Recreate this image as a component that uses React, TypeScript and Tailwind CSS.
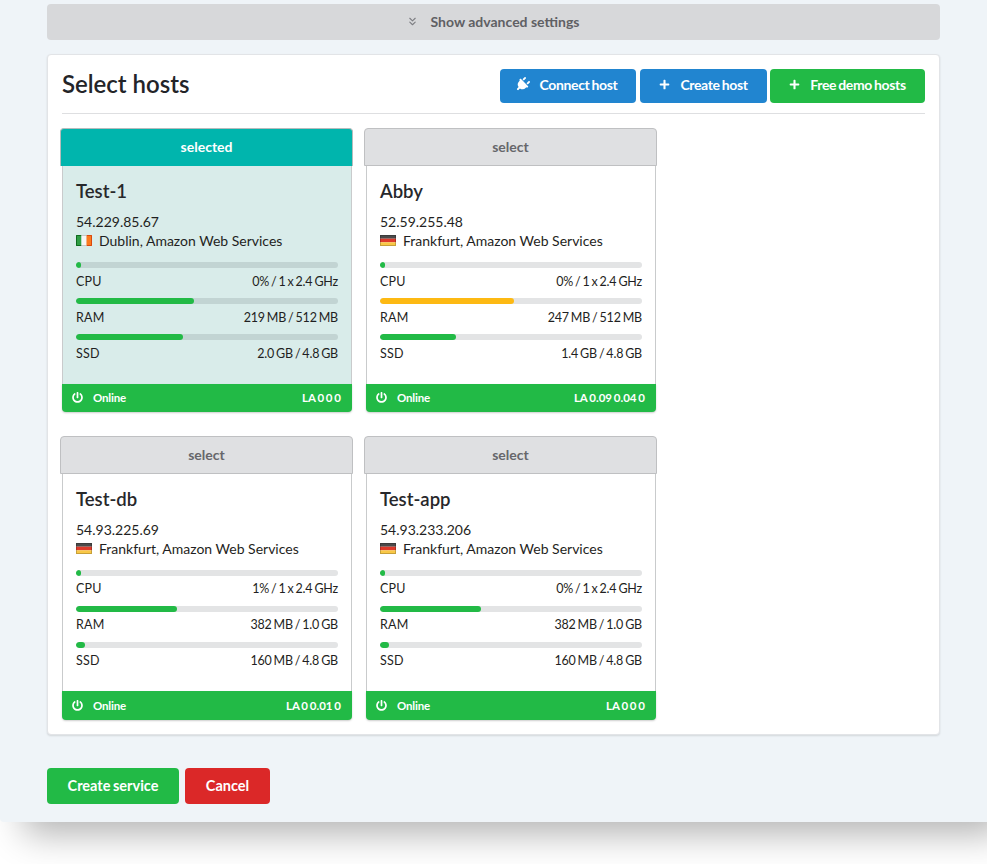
import { ChevronsDown } from 'lucide-react'
import { FaPlug, FaPlus, FaPowerOff } from 'react-icons/fa'

type Host = {
  name: string
  ip: string
  city: string
  flag: 'ie' | 'de'
  selected?: boolean
  cpu: string
  cpuPct: number
  ram: string
  ramPct: number
  ramColor?: string
  ssd: string
  ssdPct: number
  la: string
}

const hosts: Host[] = [
  { name: 'Test-1', ip: '54.229.85.67', city: 'Dublin, Amazon Web Services', flag: 'ie', selected: true, cpu: '0% / 1 x 2.4 GHz', cpuPct: 2, ram: '219 MB / 512 MB', ramPct: 45, ssd: '2.0 GB / 4.8 GB', ssdPct: 41, la: 'LA 0 0 0' },
  { name: 'Abby', ip: '52.59.255.48', city: 'Frankfurt, Amazon Web Services', flag: 'de', cpu: '0% / 1 x 2.4 GHz', cpuPct: 2, ram: '247 MB / 512 MB', ramPct: 51, ramColor: '#fdb913', ssd: '1.4 GB / 4.8 GB', ssdPct: 29, la: 'LA 0.09 0.04 0' },
  { name: 'Test-db', ip: '54.93.225.69', city: 'Frankfurt, Amazon Web Services', flag: 'de', cpu: '1% / 1 x 2.4 GHz', cpuPct: 2, ram: '382 MB / 1.0 GB', ramPct: 38.5, ssd: '160 MB / 4.8 GB', ssdPct: 3.3, la: 'LA 0 0.01 0' },
  { name: 'Test-app', ip: '54.93.233.206', city: 'Frankfurt, Amazon Web Services', flag: 'de', cpu: '0% / 1 x 2.4 GHz', cpuPct: 2, ram: '382 MB / 1.0 GB', ramPct: 38.5, ssd: '160 MB / 4.8 GB', ssdPct: 3.3, la: 'LA 0 0 0' },
]

function Flag({ code }: { code: 'ie' | 'de' }) {
  if (code === 'ie') {
    return (
      <svg width="16" height="11" viewBox="0 0 16 11" className="shrink-0">
        <rect width="5.5" height="11" fill="#2f9e44" />
        <rect x="5.5" width="5" height="11" fill="#f6f6f6" />
        <rect x="10.5" width="5.5" height="11" fill="#fb7a1e" />
        <path d="M5.5 .5H.5v10h5" fill="none" stroke="#0f6b1f" />
        <path d="M10.5 .5h5v10h-5" fill="none" stroke="#d9480f" />
        <path d="M5.5 .5h5M5.5 10.5h5" stroke="#c9c9c9" />
      </svg>
    )
  }
  return (
    <svg width="16" height="11" viewBox="0 0 16 11" className="shrink-0">
      <rect width="16" height="3.7" fill="#4a4a4a" />
      <rect y="3.7" width="16" height="3.6" fill="#dd3a2b" />
      <rect y="7.3" width="16" height="3.7" fill="#f9c846" />
      <rect x="0.5" y="0.5" width="15" height="10" fill="none" stroke="#000" strokeOpacity="0.2" />
    </svg>
  )
}

function Meter({ label, value, pct, color, selected }: { label: string; value: string; pct: number; color?: string; selected?: boolean }) {
  return (
    <div className="h-[36px]">
      <div className={`h-[6px] rounded-full overflow-hidden ${selected ? 'bg-[#c2d4d3]' : 'bg-[#e3e4e5]'}`}>
        <div className="h-full rounded-full" style={{ width: `${pct}%`, backgroundColor: color || '#22ba46' }} />
      </div>
      <div className="flex justify-between items-baseline leading-[16px] mt-[5.6px] text-[#1f1f22]">
        <span className="text-[12.5px] tracking-[0.2px]">{label}</span>
        <span className="text-[12.5px] tracking-[-0.2px] [word-spacing:-1px]">{value}</span>
      </div>
    </div>
  )
}

function HostCard({ host }: { host: Host }) {
  return (
    <div className="h-[284px] flex flex-col rounded-[4px]">
      {host.selected ? (
        <div className="h-[38px] shrink-0 pb-[2px] rounded-t-[4px] bg-[#00b5ad] border border-[#b5bcbc] border-b-0 flex items-center justify-center text-white text-[14px] font-bold">
          selected
        </div>
      ) : (
        <div className="h-[38px] shrink-0 pb-[1px] rounded-t-[4px] bg-[#dfe0e2] border border-[#bfc0c2] flex items-center justify-center text-[#66676b] text-[14px] font-bold">
          select
        </div>
      )}
      <div className={`flex-1 ml-[2px] mr-px border-x border-[#c9cbcc] px-[13px] pt-[12px] ${host.selected ? 'bg-[#d9ecea]' : 'bg-white'}`}>
        <div className="text-[18.5px] leading-[26px] font-semibold text-[#27282b]">{host.name}</div>
        <div className="mt-[8px] text-[14px] leading-[19px] text-[#1f1f22]">{host.ip}</div>
        <div className="flex items-center gap-[7px] text-[14px] leading-[19px] text-[#1f1f22]">
          <Flag code={host.flag} />
          <span>{host.city}</span>
        </div>
        <div className="mt-[12px]">
          <Meter label="CPU" value={host.cpu} pct={host.cpuPct} selected={host.selected} />
          <Meter label="RAM" value={host.ram} pct={host.ramPct} color={host.ramColor} selected={host.selected} />
          <Meter label="SSD" value={host.ssd} pct={host.ssdPct} selected={host.selected} />
        </div>
      </div>
      <div className="h-[28.5px] shrink-0 ml-[2px] mr-px pb-[0.6px] rounded-b-[4px] bg-[#22ba46] shadow-[0_1px_2px_rgba(0,0,0,0.2)] flex items-center justify-between pl-[10px] pr-[11px] text-white font-bold">
        <span className="flex items-center gap-[10px] text-[11.5px] tracking-[-0.2px]">
          <FaPowerOff className="text-[11px]" />
          Online
        </span>
        <span className="text-[11.5px] [word-spacing:-1px]">{host.la}</span>
      </div>
    </div>
  )
}

function HeadButton({ color, icon, label, width }: { color: string; icon: React.ReactNode; label: string; width: string }) {
  return (
    <button className={`${color} ${width} h-[34px] pb-[3px] rounded-[4px] text-white text-[14px] font-bold flex items-center justify-center gap-[10px] tracking-[-0.35px] [word-spacing:-1px]`}>
      {icon}
      {label}
    </button>
  )
}

export default function App() {
  return (
    <div className="w-[987px] h-[864px] bg-white overflow-hidden font-['Lato','Open_Sans',sans-serif]">
      <div className="h-[822px] bg-[#eff4f8] px-[47px] pt-[4px] rounded-bl-[4px] shadow-[20px_16px_34px_-4px_rgba(0,0,0,0.3)]">
        <div className="h-[36px] pb-[2px] rounded-[4px] bg-[#d7d8da] flex items-center justify-center gap-[12px] text-[#5f6064] text-[14px] font-bold">
          <ChevronsDown size={13} className="text-[#7d7e82] -ml-[2px]" />
          Show advanced settings
        </div>

        <div className="mt-[14px] h-[681px] bg-white rounded-[4px] border border-[#e2e4e7] shadow-[0_1px_2px_rgba(0,0,0,0.12)] px-[14px] pt-[14px]">
          <div className="h-[45px] border-b border-[#dedfe1] flex justify-between items-start">
            <h1 className="text-[24px] leading-[30px] font-semibold text-[#232428]">Select hosts</h1>
            <div className="flex gap-[4px]">
              <HeadButton color="bg-[#2185d0] pr-[4px]" width="w-[136px]" icon={<FaPlug className="text-[15px] rotate-45" />} label="Connect host" />
              <HeadButton color="bg-[#2185d0]" width="w-[127px]" icon={<FaPlus className="text-[11px]" />} label="Create host" />
              <HeadButton color="bg-[#22ba46] -ml-px" width="w-[155px]" icon={<FaPlus className="text-[11px]" />} label="Free demo hosts" />
            </div>
          </div>
          <div className="mt-[14px] grid grid-cols-[293px_293px] gap-x-[11px] gap-y-[23.7px] -ml-[2px]">
            {hosts.map(h => (
              <HostCard key={h.name} host={h} />
            ))}
          </div>
        </div>

        <div className="mt-[33px] flex gap-[6px]">
          <button className="w-[132px] h-[36px] rounded-[4px] bg-[#22ba46] text-white text-[14.5px] font-bold [word-spacing:-1px]">Create service</button>
          <button className="w-[85px] h-[36px] rounded-[4px] bg-[#db2828] text-white text-[14.5px] font-bold">Cancel</button>
        </div>
      </div>
    </div>
  )
}
